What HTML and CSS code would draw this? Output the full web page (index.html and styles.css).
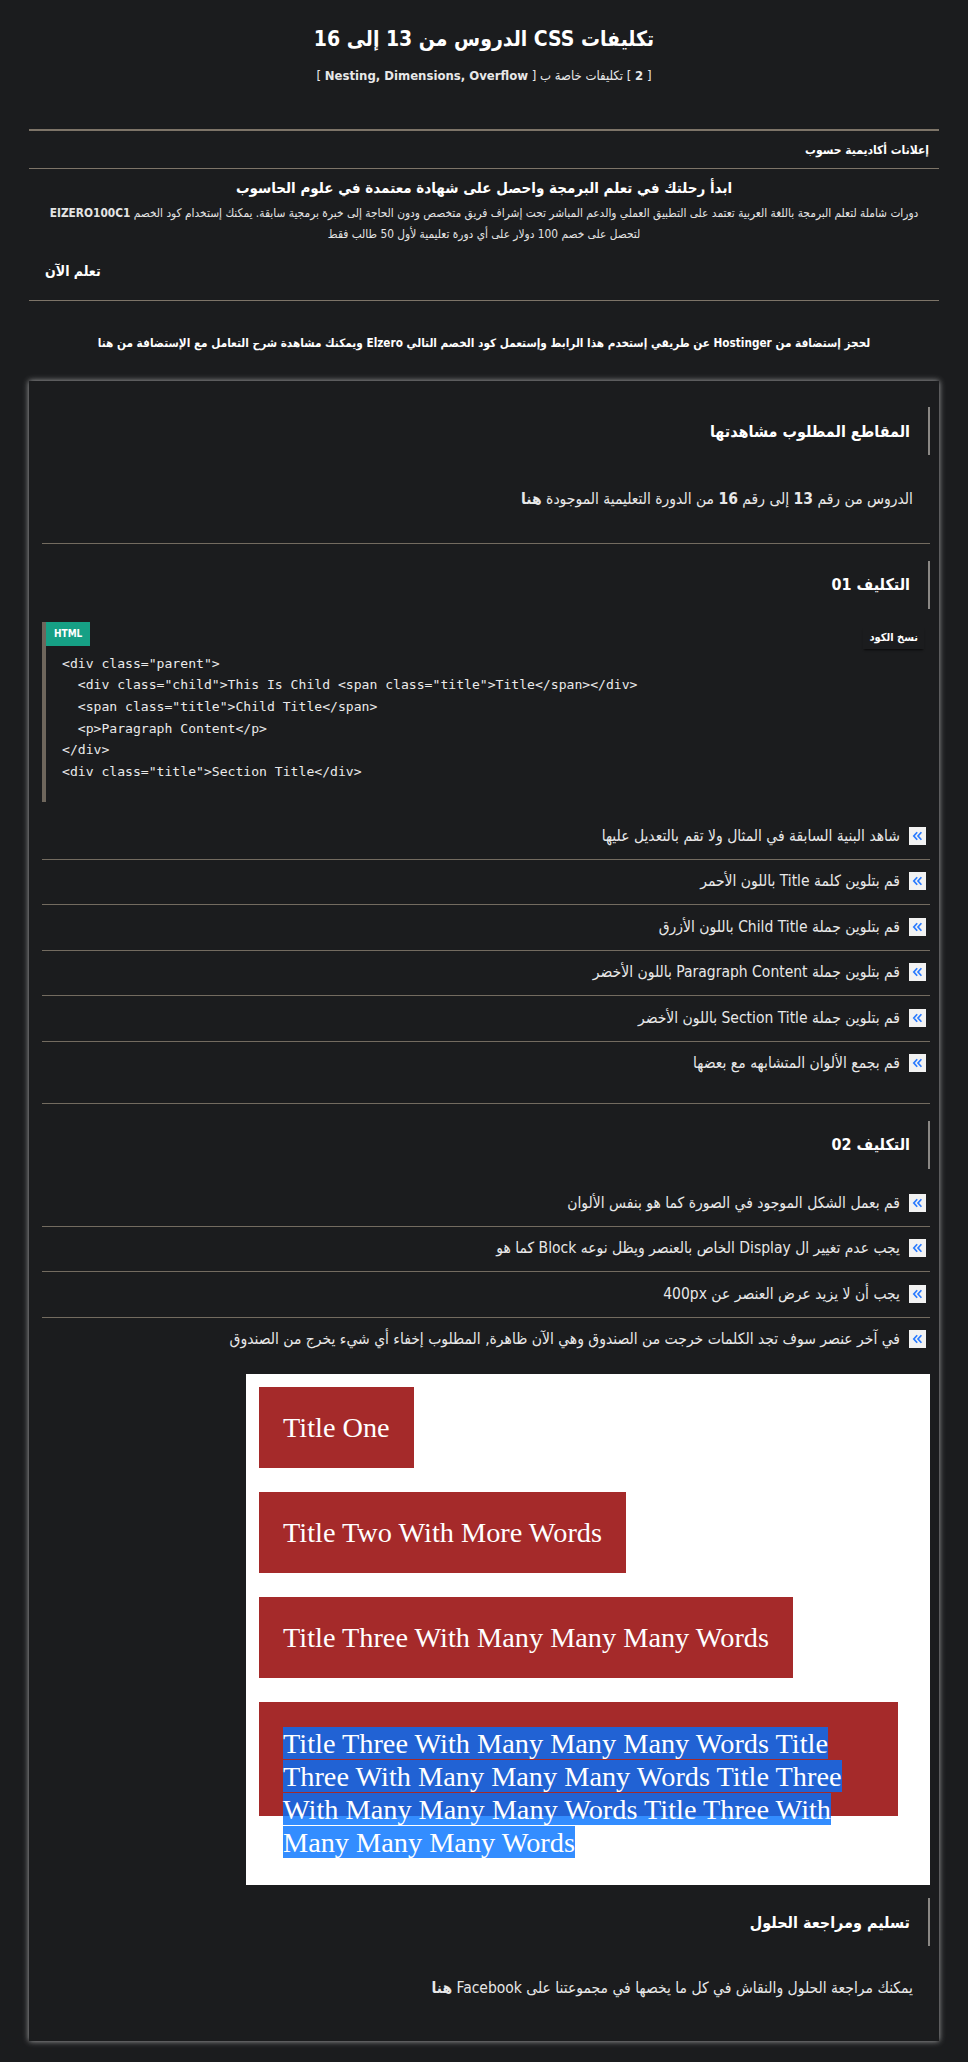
FILE: index.html
```html
<!DOCTYPE html>
<html lang="ar" dir="rtl">
<head>
<meta charset="utf-8">
<title>تكليفات CSS الدروس من 13 إلى 16</title>
<link rel="stylesheet" href="styles.css">
</head>
<body>
<header class="page-head">
  <h1 class="page-title">تكليفات CSS الدروس من 13 إلى 16</h1>
  <p class="page-sub">[ <b>2</b> ] تكليفات خاصة ب [ <b>Nesting, Dimensions, Overflow</b> ]</p>
</header>
<div class="rule-thick"></div>
<section class="ad">
  <div class="ad-label">إعلانات أكاديمية حسوب</div>
  <div class="ad-body">
    <h3 class="ad-title">ابدأ رحلتك في تعلم البرمجة واحصل على شهادة معتمدة في علوم الحاسوب</h3>
    <p class="ad-text">دورات شاملة لتعلم البرمجة باللغة العربية تعتمد على التطبيق العملي والدعم المباشر تحت إشراف فريق متخصص ودون الحاجة إلى خبرة برمجية سابقة. يمكنك إستخدام كود الخصم <b>EIZERO100C1</b><br>لتحصل على خصم 100 دولار على أي دورة تعليمية لأول 50 طالب فقط</p>
    <div class="ad-cta-row"><span class="ad-cta">تعلم الآن</span></div>
  </div>
</section>
<p class="hosting">لحجز إستضافة من Hostinger عن طريقي إستخدم هذا الرابط وإستعمل كود الخصم التالي Elzero ويمكنك مشاهدة شرح التعامل مع الإستضافة من هنا</p>

<main class="card">
  <h2 class="sec-head first">المقاطع المطلوب مشاهدتها</h2>
  <p class="sec-text">الدروس من رقم <b>13</b> إلى رقم <b>16</b> من الدورة التعليمية الموجودة <b>هنا</b></p>
  <div class="sep"></div>

  <h2 class="sec-head">التكليف 01</h2>
  <div class="code">
    <span class="code-badge">HTML</span>
    <span class="code-copy">نسخ الكود</span>
<pre>&lt;div class="parent"&gt;
  &lt;div class="child"&gt;This Is Child &lt;span class="title"&gt;Title&lt;/span&gt;&lt;/div&gt;
  &lt;span class="title"&gt;Child Title&lt;/span&gt;
  &lt;p&gt;Paragraph Content&lt;/p&gt;
&lt;/div&gt;
&lt;div class="title"&gt;Section Title&lt;/div&gt;</pre>
  </div>
  <ul class="tasks">
    <li><span class="ico"><svg viewBox="0 0 17 18" width="17" height="18"><path d="M8.2 5.2 4.8 9l3.4 3.8M12.4 5.2 9 9l3.4 3.8" fill="none" stroke="#2a7bff" stroke-width="1.7"/></svg></span><span>شاهد البنية السابقة في المثال ولا تقم بالتعديل عليها</span></li>
    <li><span class="ico"><svg viewBox="0 0 17 18" width="17" height="18"><path d="M8.2 5.2 4.8 9l3.4 3.8M12.4 5.2 9 9l3.4 3.8" fill="none" stroke="#2a7bff" stroke-width="1.7"/></svg></span><span>قم بتلوين كلمة Title باللون الأحمر</span></li>
    <li><span class="ico"><svg viewBox="0 0 17 18" width="17" height="18"><path d="M8.2 5.2 4.8 9l3.4 3.8M12.4 5.2 9 9l3.4 3.8" fill="none" stroke="#2a7bff" stroke-width="1.7"/></svg></span><span>قم بتلوين جملة Child Title باللون الأزرق</span></li>
    <li><span class="ico"><svg viewBox="0 0 17 18" width="17" height="18"><path d="M8.2 5.2 4.8 9l3.4 3.8M12.4 5.2 9 9l3.4 3.8" fill="none" stroke="#2a7bff" stroke-width="1.7"/></svg></span><span>قم بتلوين جملة Paragraph Content باللون الأخضر</span></li>
    <li><span class="ico"><svg viewBox="0 0 17 18" width="17" height="18"><path d="M8.2 5.2 4.8 9l3.4 3.8M12.4 5.2 9 9l3.4 3.8" fill="none" stroke="#2a7bff" stroke-width="1.7"/></svg></span><span>قم بتلوين جملة Section Title باللون الأخضر</span></li>
    <li><span class="ico"><svg viewBox="0 0 17 18" width="17" height="18"><path d="M8.2 5.2 4.8 9l3.4 3.8M12.4 5.2 9 9l3.4 3.8" fill="none" stroke="#2a7bff" stroke-width="1.7"/></svg></span><span>قم بجمع الألوان المتشابهه مع بعضها</span></li>
  </ul>
  <div class="sep"></div>

  <h2 class="sec-head">التكليف 02</h2>
  <ul class="tasks">
    <li><span class="ico"><svg viewBox="0 0 17 18" width="17" height="18"><path d="M8.2 5.2 4.8 9l3.4 3.8M12.4 5.2 9 9l3.4 3.8" fill="none" stroke="#2a7bff" stroke-width="1.7"/></svg></span><span>قم بعمل الشكل الموجود في الصورة كما هو بنفس الألوان</span></li>
    <li><span class="ico"><svg viewBox="0 0 17 18" width="17" height="18"><path d="M8.2 5.2 4.8 9l3.4 3.8M12.4 5.2 9 9l3.4 3.8" fill="none" stroke="#2a7bff" stroke-width="1.7"/></svg></span><span>يجب عدم تغيير ال Display الخاص بالعنصر ويظل نوعه Block كما هو</span></li>
    <li><span class="ico"><svg viewBox="0 0 17 18" width="17" height="18"><path d="M8.2 5.2 4.8 9l3.4 3.8M12.4 5.2 9 9l3.4 3.8" fill="none" stroke="#2a7bff" stroke-width="1.7"/></svg></span><span>يجب أن لا يزيد عرض العنصر عن 400px</span></li>
    <li><span class="ico"><svg viewBox="0 0 17 18" width="17" height="18"><path d="M8.2 5.2 4.8 9l3.4 3.8M12.4 5.2 9 9l3.4 3.8" fill="none" stroke="#2a7bff" stroke-width="1.7"/></svg></span><span>في آخر عنصر سوف تجد الكلمات خرجت من الصندوق وهي الآن ظاهرة, المطلوب إخفاء أي شيء يخرج من الصندوق</span></li>
  </ul>

  <div class="demo">
    <div class="demo-box">Title One</div>
    <div class="demo-box">Title Two With More Words</div>
    <div class="demo-box">Title Three With Many Many Many Words</div>
    <div class="demo-box demo-overflow"><span class="sel">Title Three With Many Many Many Words Title Three With Many Many Many Words Title Three With Many Many Many Words Title Three With Many Many Many Words</span></div>
  </div>

  <h2 class="sec-head">تسليم ومراجعة الحلول</h2>
  <p class="sec-text last">يمكنك مراجعة الحلول والنقاش في كل ما يخصها في مجموعتنا على Facebook <b>هنا</b></p>
</main>
</body>
</html>
```
FILE: styles.css
```css
* { box-sizing: border-box; }
html, body { margin: 0; }
body {
  background: #1b1c1e;
  color: #ececec;
  font-family: "DejaVu Sans Condensed", "DejaVu Sans", sans-serif;
  font-stretch: condensed;
  direction: rtl;
  padding: 0 29px 19px;
}

.page-head { padding-top: 24px; text-align: center; }
.page-title { margin: 0; font-size: 21px; line-height: 30px; font-weight: bold; color: #fff; }
.page-sub { margin: 12px 0 0; font-size: 13px; line-height: 20px; color: #e8e8e8; }
.rule-thick { height: 2px; background: #7d7468; margin-top: 43px; }

.ad-label {
  padding: 9px 10px 8px;
  font-size: 12px; line-height: 20px; font-weight: bold; color: #fff;
  border-bottom: 1px solid #7d7468;
}
.ad-body { padding: 8px 0 19px; text-align: center; border-bottom: 1px solid #7d7468; }
.ad-title { margin: 0; font-size: 15px; line-height: 22px; font-weight: bold; color: #fff; }
.ad-text { margin: 4px 0 0; font-size: 11.8px; line-height: 21px; color: #e4e4e4; }
.ad-cta-row { margin-top: 16px; direction: ltr; text-align: left; padding-left: 16px; }
.ad-cta { font-size: 14px; line-height: 20px; font-weight: bold; color: #fff; }

.hosting {
  margin: 32px 0 0;
  text-align: center; font-size: 11.7px; line-height: 20px; font-weight: bold; color: #fff;
}

.card {
  display: block;
  margin-top: 28px;
  padding: 26px 9px 43px 13px;
  box-shadow: 0 0 6px rgba(225, 225, 225, 0.75);
}

.sec-head {
  margin: 16.5px 0 0;
  height: 48px;
  display: flex; align-items: center;
  padding-right: 18px;
  border-right: 2px solid #8a8784;
  font-size: 16px; font-weight: bold; color: #fff;
}
.sec-head.first { margin-top: 0; }
.sec-text { margin: 34px 0 34px; padding-right: 17px; font-size: 15.5px; line-height: 20px; color: #e8e8e8; }
.sec-text.last { margin: 32px 0 0; }
.sep { height: 1px; background: #736b60; }

.code {
  position: relative;
  margin-top: 13px;
  border-left: 4px solid #6e665c;
  padding: 31px 16px 19px;
  direction: ltr;
}
.code pre {
  margin: 0;
  font-family: "DejaVu Sans Mono", "Liberation Mono", monospace;
  font-size: 13.1px; line-height: 21.7px; color: #eaeaea;
}
.code-badge {
  position: absolute; left: 0; top: 0;
  background: #16a085; color: #fff;
  font-size: 10px; font-weight: bold; line-height: 24px;
  padding: 0 8px;
}
.code-copy {
  position: absolute; right: 6px; top: 5px;
  font-size: 11px; font-weight: bold; line-height: 22px; color: #fff;
  padding: 0 6px;
  background: #1b1c1e;
  box-shadow: 0 2px 2px -1px rgba(0, 0, 0, 0.7);
  direction: rtl;
}

.tasks { list-style: none; margin: 12.5px 0 0; padding: 0; }
.tasks li {
  display: flex; align-items: center; gap: 9px;
  height: 45.5px;
  padding: 0 4px 1px 0;
  border-bottom: 1px solid #736b60;
  font-size: 15.5px; color: #e8e8e8;
}
.tasks li:last-child { border-bottom: none; height: 44.5px; }
.ico {
  flex: none;
  width: 17px; height: 18px;
  background: #f2f2f2;
  display: flex;
}
.ico svg { display: block; }

.tasks + .sep { margin-top: 17px; }
.tasks + .demo { margin-top: 12px; }

.demo {
  width: 684px;
  height: 511px;
  background: #fff;
  padding: 13px;
  direction: ltr;
}
.demo-box {
  width: fit-content;
  background: #a52a2a;
  color: #fff;
  font-family: "Liberation Serif", serif;
  font-size: 28.3px; line-height: 33px;
  padding: 24px;
  margin-bottom: 24px;
}
.demo-overflow { width: 639px; height: 114px; }
.sel {
  background: rgba(0, 112, 255, 0.8);
  padding: 0.5px 0;
}
.demo + .sec-head { margin-top: 13px; }
```
